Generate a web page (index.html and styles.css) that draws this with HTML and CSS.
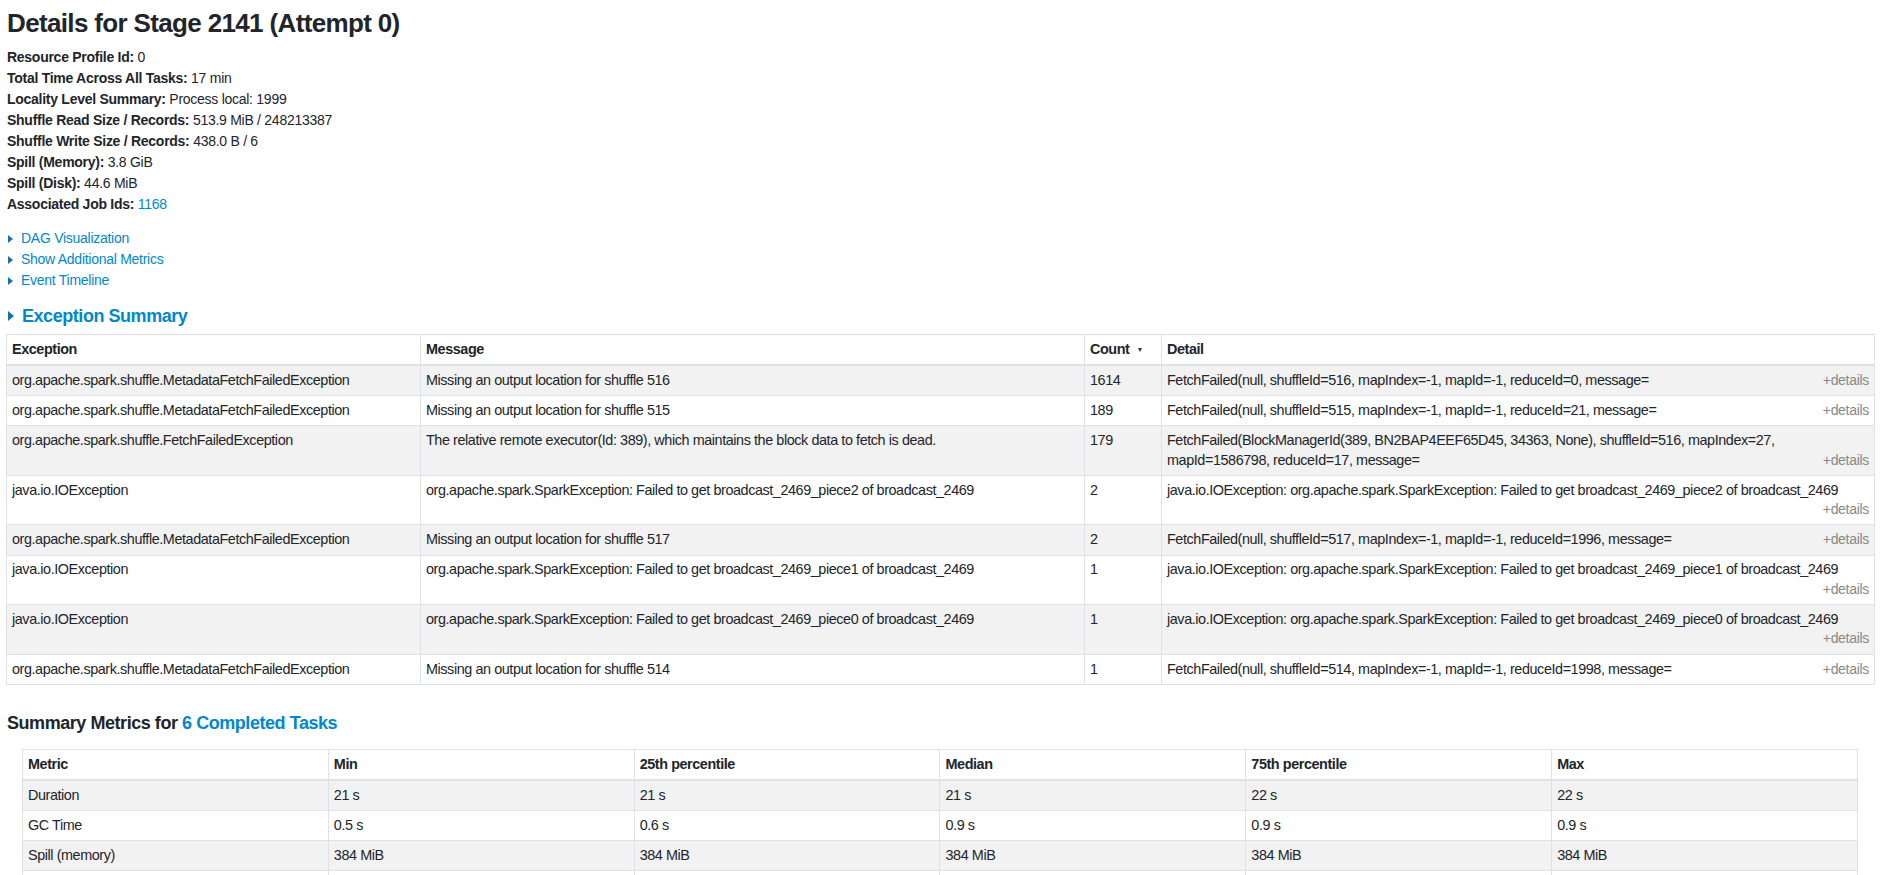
FILE: index.html
```html
<!DOCTYPE html>
<html lang="en">
<head>
<meta charset="utf-8">
<title>Stage 2141</title>
<link rel="stylesheet" href="styles.css">
</head>
<body>
<div class="page">
  <h3 class="title">Details for Stage 2141 (Attempt 0)</h3>
  <ul class="info">
    <li><strong>Resource Profile Id:</strong> 0</li>
    <li><strong>Total Time Across All Tasks:</strong> 17 min</li>
    <li><strong>Locality Level Summary:</strong> Process local: 1999</li>
    <li><strong>Shuffle Read Size / Records:</strong> 513.9 MiB / 248213387</li>
    <li><strong>Shuffle Write Size / Records:</strong> 438.0 B / 6</li>
    <li><strong>Spill (Memory):</strong> 3.8 GiB</li>
    <li><strong>Spill (Disk):</strong> 44.6 MiB</li>
    <li><strong>Associated Job Ids:</strong> <a href="#">1168</a></li>
  </ul>
  <div class="toggles">
    <div class="toggle"><span class="arrow"></span><a href="#">DAG Visualization</a></div>
    <div class="toggle"><span class="arrow"></span><a href="#">Show Additional Metrics</a></div>
    <div class="toggle"><span class="arrow"></span><a href="#">Event Timeline</a></div>
  </div>
  <h4 class="section"><span class="arrow big"></span><a href="#">Exception Summary</a></h4>
  <table class="tbl exc">
    <colgroup>
      <col class="c-exc"><col class="c-msg"><col class="c-cnt"><col class="c-det">
    </colgroup>
    <thead>
      <tr><th>Exception</th><th>Message</th><th>Count<span class="sort"></span></th><th>Detail</th></tr>
    </thead>
    <tbody>
      <tr><td>org.apache.spark.shuffle.MetadataFetchFailedException</td><td>Missing an output location for shuffle 516</td><td>1614</td><td>FetchFailed(null, shuffleId=516, mapIndex=-1, mapId=-1, reduceId=0, message=<span class="more">+details</span></td></tr>
      <tr><td>org.apache.spark.shuffle.MetadataFetchFailedException</td><td>Missing an output location for shuffle 515</td><td>189</td><td>FetchFailed(null, shuffleId=515, mapIndex=-1, mapId=-1, reduceId=21, message=<span class="more">+details</span></td></tr>
      <tr><td>org.apache.spark.shuffle.FetchFailedException</td><td>The relative remote executor(Id: 389), which maintains the block data to fetch is dead.</td><td>179</td><td>FetchFailed(BlockManagerId(389, BN2BAP4EEF65D45, 34363, None), shuffleId=516, mapIndex=27, mapId=1586798, reduceId=17, message=<span class="more">+details</span></td></tr>
      <tr><td>java.io.IOException</td><td>org.apache.spark.SparkException: Failed to get broadcast_2469_piece2 of broadcast_2469</td><td>2</td><td>java.io.IOException: org.apache.spark.SparkException: Failed to get broadcast_2469_piece2 of broadcast_2469<span class="more">+details</span></td></tr>
      <tr><td>org.apache.spark.shuffle.MetadataFetchFailedException</td><td>Missing an output location for shuffle 517</td><td>2</td><td>FetchFailed(null, shuffleId=517, mapIndex=-1, mapId=-1, reduceId=1996, message=<span class="more">+details</span></td></tr>
      <tr><td>java.io.IOException</td><td>org.apache.spark.SparkException: Failed to get broadcast_2469_piece1 of broadcast_2469</td><td>1</td><td>java.io.IOException: org.apache.spark.SparkException: Failed to get broadcast_2469_piece1 of broadcast_2469<span class="more">+details</span></td></tr>
      <tr><td>java.io.IOException</td><td>org.apache.spark.SparkException: Failed to get broadcast_2469_piece0 of broadcast_2469</td><td>1</td><td>java.io.IOException: org.apache.spark.SparkException: Failed to get broadcast_2469_piece0 of broadcast_2469<span class="more">+details</span></td></tr>
      <tr><td>org.apache.spark.shuffle.MetadataFetchFailedException</td><td>Missing an output location for shuffle 514</td><td>1</td><td>FetchFailed(null, shuffleId=514, mapIndex=-1, mapId=-1, reduceId=1998, message=<span class="more">+details</span></td></tr>
    </tbody>
  </table>
  <h4 class="section summary">Summary Metrics for <a href="#">6 Completed Tasks</a></h4>
  <div class="metrics-wrap">
    <table class="tbl metrics">
      <thead>
        <tr><th>Metric</th><th>Min</th><th>25th percentile</th><th>Median</th><th>75th percentile</th><th>Max</th></tr>
      </thead>
      <tbody>
        <tr><td>Duration</td><td>21 s</td><td>21 s</td><td>21 s</td><td>22 s</td><td>22 s</td></tr>
        <tr><td>GC Time</td><td>0.5 s</td><td>0.6 s</td><td>0.9 s</td><td>0.9 s</td><td>0.9 s</td></tr>
        <tr><td>Spill (memory)</td><td>384 MiB</td><td>384 MiB</td><td>384 MiB</td><td>384 MiB</td><td>384 MiB</td></tr>
        <tr><td>Spill (disk)</td><td>7.4 MiB</td><td>7.4 MiB</td><td>7.4 MiB</td><td>7.5 MiB</td><td>7.5 MiB</td></tr>
      </tbody>
    </table>
  </div>
</div>
</body>
</html>
```

FILE: styles.css
```css
html, body {
  margin: 0;
  padding: 0;
  background: #ffffff;
}

body {
  font-family: "Liberation Sans", Arial, sans-serif;
  color: #212529;
  overflow: hidden;
}

a {
  color: #0088cc;
  text-decoration: none;
}

.page {
  padding: 0 9px 0 6px;
}

.title {
  font-size: 26px;
  letter-spacing: -0.65px;
  font-weight: bold;
  line-height: 35px;
  margin: 6px 0 6px 1px;
}

.info {
  list-style: none;
  margin: 0;
  padding: 0 0 0 1px;
  font-size: 14px;
  letter-spacing: -0.27px;
  line-height: 21px;
}

.info strong {
  font-weight: bold;
}

.toggles {
  margin-top: 13px;
  font-size: 14px;
  letter-spacing: -0.27px;
  line-height: 21px;
}

.arrow {
  display: inline-block;
  width: 0;
  height: 0;
  border-top: 4px solid transparent;
  border-bottom: 4px solid transparent;
  border-left: 5px solid #1a6fa8;
  margin: 0 8px 0 2px;
  vertical-align: 0;
}

.arrow.big {
  border-top-width: 5px;
  border-bottom-width: 5px;
  border-left-width: 6px;
  margin-right: 8px;
  vertical-align: 1px;
}

.section {
  font-size: 18px;
  letter-spacing: -0.45px;
  font-weight: bold;
  line-height: 24px;
  margin: 13px 0 6px 0;
}

.section.summary {
  margin: 26px 0 14px 1px;
}

.tbl {
  width: 100%;
  border-collapse: collapse;
  table-layout: fixed;
  font-size: 14.4px;
  letter-spacing: -0.42px;
  line-height: 19.5px;
}

.tbl th,
.tbl td {
  border: 1px solid #dee2e6;
  padding: 4.8px 5px;
  text-align: left;
  vertical-align: top;
}

.tbl thead th {
  font-weight: bold;
  border-bottom: 2px solid #dee2e6;
}

.tbl tbody tr:nth-child(odd) {
  background: #f2f2f2;
}

.c-exc { width: 414px; }
.c-msg { width: 664px; }
.c-cnt { width: 77px; }
.c-det { width: 713px; }

.sort {
  display: inline-block;
  width: 0;
  height: 0;
  border-left: 2.5px solid transparent;
  border-right: 2.5px solid transparent;
  border-top: 4px solid #333333;
  margin-left: 9px;
  vertical-align: 2px;
}

.more {
  float: right;
  font-size: 14px;
  letter-spacing: -0.3px;
  color: #888888;
}

.metrics-wrap {
  padding: 0 16px;
}
```
